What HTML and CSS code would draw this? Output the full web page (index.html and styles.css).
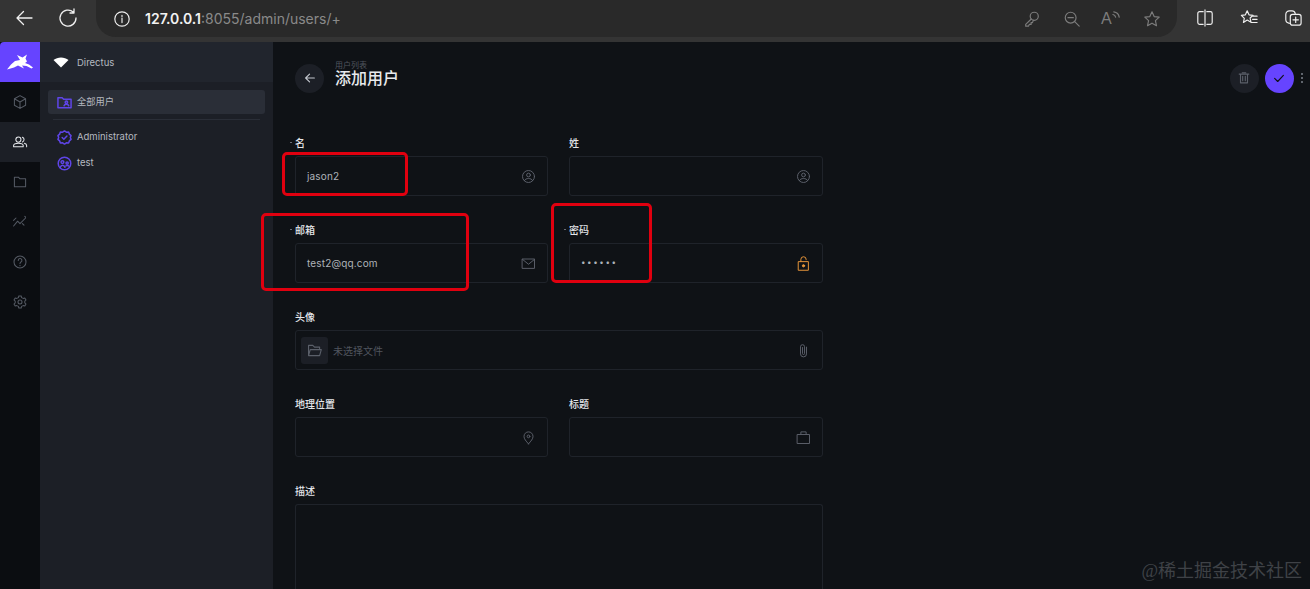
FILE: index.html
```html
<!DOCTYPE html>
<html lang="zh">
<head>
    <meta charset="UTF-8">
    <meta name="viewport" content="width=device-width, initial-scale=1.0">
    <title>添加用户</title>
    <link rel="stylesheet" href="styles.css">
</head>
<body>

    <div class="browser-bar">
        <svg class="tool-icon first" viewBox="0 0 20 20"><path d="M18 10H3M9.500 3.500 3 10l6.500 6.500"/></svg>
        <svg class="tool-icon reload" viewBox="0 0 20 20"><path d="M15.500 4.300A8 8 0 1 0 18 10M16 1v4h-4"/></svg>
        <div class="address">
            <svg class="info-icon" viewBox="0 0 20 20"><circle cx="10" cy="10" r="8"/><path d="M10 9v5M10 6v1.300"/></svg>
            <span class="url"><b>127.0.0.1</b>:8055/admin/users/+</span>
            <svg class="addr-icon" viewBox="0 0 20 20"><circle cx="12.500" cy="7" r="4.500"/><path d="M9.200 10 3 16v2h3l1-2h2v-2h1.500l1-2.500"/></svg>
            <svg class="addr-icon" viewBox="0 0 20 20"><circle cx="8.500" cy="8.500" r="6"/><path d="M5.500 8.500h6M13 13l5 5"/></svg>
            <span class="read-aloud">A<svg viewBox="0 0 10 10"><path d="M1 5a4 4 0 0 1 3 3M2 2a7 7 0 0 1 6 6"/></svg></span>
            <svg class="addr-icon" viewBox="0 0 20 20"><path d="m10 2 2.400 5.300 5.600.6-4.200 3.900 1.200 5.700-5-2.900-5 2.900 1.200-5.700L2 7.900l5.600-.6z"/></svg>
        </div>
        <svg class="tool-icon side" viewBox="0 0 20 20"><path d="M8 3H4a2 2 0 0 0-2 2v10a2 2 0 0 0 2 2h4M12 3h4a2 2 0 0 1 2 2v10a2 2 0 0 1-2 2h-4M10 1v18"/></svg>
        <svg class="tool-icon side" viewBox="0 0 20 20"><path d="m8 2 2 4.500 4.500.5-3.300 3 1 4.600L8 12.300 3.800 15l1-4.600L1.500 7 6 6.500zM13 8h6M14 11.500h5M12.500 15H19"/></svg>
        <svg class="tool-icon side" viewBox="0 0 20 20"><path d="M6 16c-2.500-.5-4-2-4-4V6a4 4 0 0 1 4-4h3c2 0 3 1 3.500 3"/><rect x="7" y="6" width="12" height="12" rx="2.500"/><path d="M13 9v6M10 12h6"/></svg>
    </div>

    <div class="app">
        <nav class="module-bar">
            <div class="logo">
                <svg viewBox="0 0 26 16"><path d="M0 15.500 4 10.500 8 7l5-1-3-5 5.500 2.500L20 .5l-1.500 4 1.500 3L18 9l4 1.500 4 3-1.500 1-5-2.500-4.500-.5 2 3-6-3-4 2z"/></svg>
            </div>
            <a class="module"><svg viewBox="0 0 20 20"><path d="M10 2 3 6v8l7 4 7-4V6zM3 6l7 4 7-4M10 10v8"/></svg></a>
            <a class="module active"><svg viewBox="0 0 20 20"><circle cx="8" cy="7" r="3.200"/><path d="M2 16v-1.500C2 12.500 4 11.500 8 11.500s6 1 6 3V16zM13 4a3.200 3.200 0 0 1 0 6M15.500 11.700c1.700.5 2.800 1.300 2.800 2.800V16"/></svg></a>
            <a class="module"><svg viewBox="0 0 20 20"><path d="M3 4h5l2 2h7v10H3z"/></svg></a>
            <a class="module"><svg viewBox="0 0 20 20"><path d="m2 15 5-6 3 3 7-7M2 8l3-3M13 12l2 2M16 3l1 1"/></svg></a>
            <a class="module"><svg viewBox="0 0 20 20"><circle cx="10" cy="10" r="7.500"/><path d="M7.800 8a2.300 2.300 0 1 1 3.400 2c-.8.500-1.200 1-1.200 2M10 14v.8"/></svg></a>
            <a class="module"><svg viewBox="0 0 20 20"><circle cx="10" cy="10" r="2.500"/><path d="m8.500 2.500-.5 2-2 1-2-.6L2.500 7.500 4 9v2l-1.500 1.500L4 15.100l2-.6 2 1 .5 2h3l.5-2 2-1 2 .6 1.500-2.600L16 11V9l1.500-1.500L16 4.900l-2 .6-2-1-.5-2z"/></svg></a>
        </nav>

        <aside class="sidebar">
            <div class="project">
                <svg class="wifi" viewBox="0 0 16 12"><path d="M8 11.500.5 4C4.500.5 11.500.5 15.500 4z"/></svg>
                <span>Directus</span>
            </div>
            <div class="side-list">
                <a class="side-item current">
                    <svg viewBox="0 0 16 16"><path d="M1 3h4.500L7 4.500h8v9H1z"/><circle cx="10" cy="7.800" r="1.300"/><path d="M7.500 11.500c.3-1.200 1.200-1.600 2.500-1.600s2.200.4 2.500 1.600"/></svg>
                    <span>全部用户</span>
                </a>
                <hr class="side-line">
                <a class="side-item">
                    <svg viewBox="0 0 16 16"><path d="m8 1 2 1.300 2.400-.1.800 2.200 1.800 1.600-.8 2 .8 2-1.800 1.600-.8 2.200-2.400-.1L8 15l-2-1.300-2.400.1-.8-2.200L1 10l.8-2-.8-2 1.800-1.600.8-2.200 2.400.1z"/><path d="m5.500 8 1.800 1.800 3.300-3.300"/></svg>
                    <span>Administrator</span>
                </a>
                <a class="side-item">
                    <svg viewBox="0 0 16 16"><circle cx="8" cy="8" r="6.700"/><circle cx="5.800" cy="6.500" r="1.500"/><circle cx="10.800" cy="7.500" r="1.200"/><path d="M3.500 12c.5-1.500 1.500-2.200 2.500-2.200s2 .7 2.500 2.200M9.500 10.500c1-.6 2.500-.5 3.500.5"/></svg>
                    <span>test</span>
                </a>
            </div>
        </aside>

        <main class="main">
            <header class="page-header">
                <button class="round-btn"><svg viewBox="0 0 16 16"><path d="M13 8H3M7.500 3.500 3 8l4.500 4.500"/></svg></button>
                <div class="titles">
                    <div class="crumb">用户列表</div>
                    <h1>添加用户</h1>
                </div>
                <div class="actions">
                    <button class="round-btn dim"><svg viewBox="0 0 16 16"><path d="M2.500 3.500h11M4 3.500v10h8v-10M6 2h4M6.500 6v5M9.500 6v5"/></svg></button>
                    <button class="round-btn save"><svg viewBox="0 0 16 16"><path d="m3 8.500 3.500 3.500L13 5"/></svg></button>
                    <span class="more"><i></i><i></i><i></i></span>
                </div>
            </header>

            <form class="form">
                <div class="field">
                    <label class="required">名</label>
                    <div class="input"><span class="value">jason2</span>
                        <svg class="field-icon" viewBox="0 0 20 20"><circle cx="10" cy="10" r="8"/><circle cx="10" cy="8" r="2.500"/><path d="M4.500 15.500c1-2 3-2.800 5.500-2.800s4.500.8 5.500 2.800"/></svg>
                    </div>
                </div>
                <div class="field">
                    <label>姓</label>
                    <div class="input">
                        <svg class="field-icon" viewBox="0 0 20 20"><circle cx="10" cy="10" r="8"/><circle cx="10" cy="8" r="2.500"/><path d="M4.500 15.500c1-2 3-2.800 5.500-2.800s4.500.8 5.500 2.800"/></svg>
                    </div>
                </div>
                <div class="field">
                    <label class="required">邮箱</label>
                    <div class="input"><span class="value">test2@qq.com</span>
                        <svg class="field-icon" viewBox="0 0 20 20"><path d="M2 4h16v12.500H2zM2 4.500l8 6.500 8-6.500"/></svg>
                    </div>
                </div>
                <div class="field">
                    <label class="required">密码</label>
                    <div class="input"><span class="value dots">••••••</span>
                        <svg class="field-icon warn" viewBox="0 0 20 20"><path d="M3.500 7.500h13V19h-13zM6.500 7.500V4.500a3.500 3.500 0 0 1 7 0V5"/><circle cx="10" cy="13" r="1.500" class="fill"/></svg>
                    </div>
                </div>
                <div class="field wide">
                    <label>头像</label>
                    <div class="input file">
                        <span class="file-thumb"><svg viewBox="0 0 20 20"><path d="M3 16V4h5l2 2h6v2M3 16l2-7h13l-2 7z"/></svg></span>
                        <span class="placeholder">未选择文件</span>
                        <svg class="field-icon" viewBox="0 0 20 20"><path d="M14 5.500v9a4 4 0 0 1-8 0V5a2.700 2.700 0 0 1 5.400 0v9a1.300 1.300 0 0 1-2.700 0V6"/></svg>
                    </div>
                </div>
                <div class="field">
                    <label>地理位置</label>
                    <div class="input">
                        <svg class="field-icon" viewBox="0 0 20 20"><path d="M10 18.500c-3.500-4-6-6.500-6-10a6 6 0 0 1 12 0c0 3.500-2.500 6-6 10z"/><circle cx="10" cy="8.500" r="1.800"/></svg>
                    </div>
                </div>
                <div class="field">
                    <label>标题</label>
                    <div class="input">
                        <svg class="field-icon" viewBox="0 0 20 20"><path d="M2 6h16v12H2zM6.500 6V2.500h7V6"/></svg>
                    </div>
                </div>
                <div class="field wide">
                    <label>描述</label>
                    <div class="input textarea"></div>
                </div>
            </form>

            <div class="mark mark-name"></div>
            <div class="mark mark-mail"></div>
            <div class="mark mark-pass"></div>
            <div class="watermark">@稀土掘金技术社区</div>
        </main>
    </div>

</body>
</html>
```

FILE: styles.css
```css
* {
    margin: 0;
    padding: 0;
    box-sizing: border-box;
    font-family: 'Inter', 'Noto Sans CJK SC', sans-serif;
}

body {
    width: 1310px;
    height: 589px;
    overflow: hidden;
    background-color: #0f1216;
    display: flex;
    flex-direction: column;
}

svg {
    fill: none;
    stroke: currentColor;
    stroke-width: 1.3;
    stroke-linecap: round;
    stroke-linejoin: round;
    display: block;
}

/* browser chrome */
.browser-bar {
    height: 42px;
    flex-shrink: 0;
    background-color: #343434;
    display: flex;
    align-items: flex-start;
    color: #f0f0f0;
}

.tool-icon {
    width: 20px;
    height: 20px;
    margin-top: 8px;
    flex-shrink: 0;
}

.tool-icon.first {
    margin-left: 14px;
}

.tool-icon.reload {
    margin-left: 24px;
}

.tool-icon.side {
    width: 18px;
    height: 18px;
    margin-top: 9px;
    margin-left: 26px;
}

.address {
    width: 1081px;
    height: 37px;
    flex-shrink: 0;
    margin-left: 18px;
    margin-right: -7px;
    background-color: #292929;
    border-radius: 0 0 20px 20px;
    display: flex;
    align-items: center;
    padding: 0 16px 0 17px;
    gap: 20px;
    color: #7c7c7c;
}

.info-icon {
    width: 18px;
    height: 18px;
    color: #eeeeee;
}

.url {
    flex: 1;
    margin-left: -6px;
    font-size: 14px;
    color: #8a8a8a;
}

.url b {
    color: #f2f2f2;
    font-weight: 600;
}

.addr-icon {
    width: 18px;
    height: 18px;
    margin-left: 2px;
}

.read-aloud {
    width: 20px;
    height: 18px;
    font-size: 16px;
    line-height: 18px;
    color: #7c7c7c;
    display: flex;
    font-family: 'Liberation Sans', sans-serif;
}

.read-aloud svg {
    width: 9px;
    height: 9px;
}

/* left module bar */
.app {
    flex: 1;
    display: flex;
    min-height: 0;
}

.module-bar {
    width: 40px;
    flex-shrink: 0;
    background-color: #0b0d11;
}

.logo {
    height: 40px;
    background-color: #6644ff;
    border-radius: 4px 0 0 0;
    display: flex;
    align-items: center;
    justify-content: center;
}

.logo svg {
    width: 26px;
    height: 16px;
    fill: #ffffff;
    stroke: none;
}

.module {
    height: 40px;
    display: flex;
    align-items: center;
    justify-content: center;
    color: #555a64;
}

.module svg {
    width: 16px;
    height: 16px;
}

.module.active {
    background-color: #1c1f26;
    color: #e4e6ea;
}

/* sidebar */
.sidebar {
    width: 233px;
    flex-shrink: 0;
    background-color: #1c1f26;
}

.project {
    height: 40px;
    background-color: #21252d;
    display: flex;
    align-items: center;
    padding-left: 13px;
    gap: 8px;
    font-size: 9.5px;
    color: #b5b9c0;
}

.wifi {
    width: 16px;
    height: 12px;
    fill: #ffffff;
    stroke: none;
}

.side-list {
    padding: 8px 8px 0;
}

.side-item {
    height: 26px;
    display: flex;
    align-items: center;
    gap: 5px;
    padding-left: 9px;
    font-size: 9.5px;
    color: #b5b9c0;
}

.side-item span {
    padding-bottom: 2px;
}

.side-item svg {
    width: 15px;
    height: 15px;
    stroke-width: 1.6;
    color: #5f45e8;
}

.side-item.current {
    height: 24px;
    background-color: #2a2e37;
    border-radius: 3px;
    font-size: 9.25px;
}

.side-line {
    border: none;
    border-top: 1px solid #2a2e37;
    margin: 5px 5px 4px;
}

/* content */
.main {
    flex: 1;
    position: relative;
    background-color: #0f1216;
    padding-left: 22px;
}

.page-header {
    height: 72px;
    display: flex;
    align-items: center;
    gap: 11px;
    padding-right: 7.5px;
}

.round-btn {
    width: 29px;
    height: 29px;
    border: none;
    border-radius: 50%;
    background-color: #1c1f26;
    color: #c3c7ce;
    display: flex;
    align-items: center;
    justify-content: center;
}

.round-btn svg {
    width: 14px;
    height: 14px;
}

.round-btn.dim {
    color: #5b606a;
}

.round-btn.save {
    background-color: #6644ff;
    color: #0f1216;
}

.titles {
    flex: 1;
    margin-top: -8px;
}

.crumb {
    font-size: 8px;
    line-height: 8px;
    color: #50555e;
}

h1 {
    font-size: 16px;
    line-height: 19px;
    font-weight: 500;
    color: #e8eaed;
}

.actions {
    display: flex;
    align-items: center;
    gap: 6px;
}

.more {
    display: flex;
    flex-direction: column;
    gap: 2px;
    padding-left: 1px;
}

.more i {
    width: 2px;
    height: 2px;
    border-radius: 50%;
    background-color: #7d828b;
}

.form {
    width: 528px;
    margin-top: 21px;
    display: grid;
    grid-template-columns: 253px 254px;
    column-gap: 21px;
    row-gap: 26px;
}

.field.wide {
    grid-column: 1 / 3;
}

label {
    display: block;
    position: relative;
    font-size: 10px;
    line-height: 16px;
    font-weight: 500;
    margin-bottom: 5px;
    color: #e4e6ea;
}

label.required::before {
    content: "";
    position: absolute;
    left: -5px;
    top: 7px;
    width: 2px;
    height: 1px;
    background-color: #6a6f78;
}

.input {
    height: 40px;
    border: 1px solid #1f232a;
    border-radius: 3px;
    display: flex;
    align-items: center;
    justify-content: flex-end;
    padding: 0 11px 0 11px;
    font-size: 10px;
    color: #aeb2b9;
}

.value {
    flex: 1;
    letter-spacing: 0.15px;
}

.value.dots {
    font-size: 8px;
    letter-spacing: 1.6px;
    padding-bottom: 2px;
}

.field-icon {
    width: 15px;
    height: 15px;
    color: #5b606a;
}

.field-icon.warn {
    color: #e8963a;
}

.field-icon .fill {
    fill: currentColor;
}

.input.file {
    padding-left: 5px;
}

.file-thumb {
    width: 27px;
    height: 27px;
    border-radius: 3px;
    background-color: #1c1f26;
    color: #5b606a;
    display: flex;
    align-items: center;
    justify-content: center;
    margin-right: 5px;
}

.file-thumb svg {
    width: 17px;
    height: 17px;
}

.placeholder {
    flex: 1;
    color: #50555e;
}

/* the box carries on below the fold */
.input.textarea {
    height: 85px;
    border-bottom: none;
    border-radius: 3px 3px 0 0;
}

/* red marks drawn over the screenshot */
.mark {
    position: absolute;
    border: 3px solid #e0000f;
    border-radius: 5px;
}

.mark-name {
    left: 9px;
    top: 110px;
    width: 126px;
    height: 44px;
}

.mark-mail {
    left: -12px;
    top: 171px;
    width: 208px;
    height: 78px;
}

.mark-pass {
    left: 278px;
    top: 161px;
    width: 101px;
    height: 80px;
}

.watermark {
    position: absolute;
    right: 8px;
    bottom: 7px;
    font-size: 18px;
    line-height: 22px;
    color: #3f4247;
    font-family: 'Liberation Serif', 'Noto Sans CJK SC', serif;
}
```
